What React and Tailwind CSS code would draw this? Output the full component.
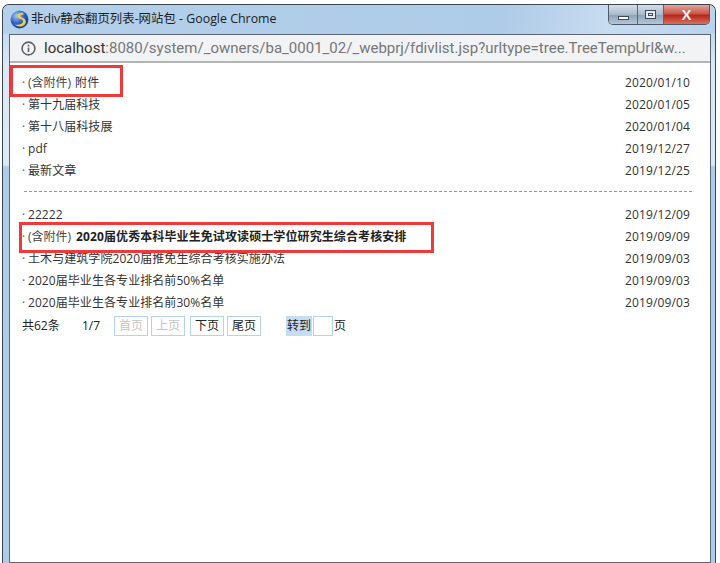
const font = { fontFamily: '"Open Sans","Noto Sans CJK SC",sans-serif' };

function Row({ title, date, attach, bold }) {
  return (
    <div className="flex h-[22px] items-center justify-between pl-[12px] pr-[20px] text-[12px] text-[#333333]">
      <div className="flex items-center whitespace-nowrap">
        <span className="w-[6px] text-[#555555]">·</span>
        {attach && <span className={bold ? "mr-[5px] text-[#444444]" : "mr-[4px] text-[#444444]"}>(含附件)</span>}
        <span className={bold ? "font-bold tracking-[0.1px] text-[#222222]" : "tracking-[0.07px]"}>{title}</span>
      </div>
      <span className="tracking-[0.13px]">{date}</span>
    </div>
  );
}

function PageBtn({ children, disabled, className }) {
  return (
    <span className={"flex h-[20px] w-[34px] items-center justify-center border border-[#b5d3ee] " + (disabled ? "text-[#c4c4c4] " : "text-[#222222] ") + (className || "")}>
      {children}
    </span>
  );
}

function Globe() {
  return (
    <svg width="19" height="19" viewBox="0 0 17 17" className="shrink-0">
      <defs>
        <radialGradient id="g" cx="35%" cy="30%" r="75%">
          <stop offset="0%" stopColor="#a8c8f4" />
          <stop offset="55%" stopColor="#2b62c8" />
          <stop offset="100%" stopColor="#123a8c" />
        </radialGradient>
      </defs>
      <circle cx="8.5" cy="8.5" r="8" fill="url(#g)" />
      <path d="M11.5 2.5 C8 2.5 5.5 4.5 7 6.5 C8.5 8.5 12.5 8 11.5 11 C10.8 13 7.5 13.5 4 13 C7 15.5 12 15.5 13.8 12 C15.5 8.5 11.5 7 9.5 6 C8.5 5 10 3.8 12.5 4 Z" fill="#f2cf3c" />
    </svg>
  );
}

export default function App() {
  return (
    <div className="relative flex h-[563px] w-[720px] flex-col overflow-hidden bg-white pl-[2px] pt-[4px]" style={font}>
      <div className="flex h-[559px] w-[714px] flex-col rounded-t-[7px] border-x border-t border-[#3c4650] bg-[linear-gradient(180deg,#b5d1ec_0px,#c4daf0_30px,#dbe8f5_60px,#dce8f4_160px,#aecbe9_162px,#aecbe9_100%)]">
        <div className="flex h-[29px] shrink-0 items-start justify-between rounded-t-[6px] bg-[linear-gradient(100deg,#b4d0eb_0%,#aecbe7_70%,#c8dcf1_85%,#b9d3ec_100%)] pl-[7px]">
          <div className="flex h-[28px] items-center gap-[2px] pt-[1px]">
            <Globe />
            <span className="whitespace-nowrap text-[12.4px] text-[#1c1c1c]">非div静态翻页列表-网站包 - Google Chrome</span>
          </div>
          <div className="mr-[5px] flex h-[20px] w-[102px] overflow-hidden rounded-b-[5px] border-x border-b border-[#4e5a68]">
            <div className="flex w-[29px] items-end justify-center border-r border-[#5a6674] bg-[linear-gradient(180deg,#d4dfeb_0%,#a9bacc_50%,#8fa3b9_55%,#b4c6d8_100%)] pb-[4px]">
              <div className="h-[4px] w-[11px] border border-[#3e4a58] bg-white" />
            </div>
            <div className="flex w-[26px] items-center justify-center border-r border-[#5a6674] bg-[linear-gradient(180deg,#d4dfeb_0%,#a9bacc_50%,#8fa3b9_55%,#b4c6d8_100%)]">
              <div className="flex h-[9px] w-[11px] items-center justify-center border border-[#3e4a58] bg-[#e4ebf2]">
                <div className="h-[3px] w-[5px] border border-[#3e4a58]" />
              </div>
            </div>
            <div className="flex flex-1 items-center justify-center bg-[linear-gradient(180deg,#e2a59a_0%,#c9584a_45%,#b8281c_55%,#d8705c_100%)]">
              <span className="text-[15px] font-bold leading-none text-[#f4f4f4]" style={{ fontFamily: '"Liberation Sans",sans-serif' }}>X</span>
            </div>
          </div>
        </div>
        <div className="ml-[6px] mr-[4px] flex min-h-0 flex-1 flex-col border border-[#5a6673] bg-white">
          <div className="flex h-[28px] shrink-0 items-center gap-[8px] overflow-hidden border-b-2 border-[#b3b3b3] bg-[#f1f3f5] pl-[11px]">
            <svg width="15" height="15" viewBox="0 0 15 15" fill="none" stroke="#5f6368" strokeWidth="1.6" className="shrink-0">
              <circle cx="7.5" cy="7.5" r="6.4" />
              <path d="M7.5 6.6v4.4M7.5 3.8v1.6" />
            </svg>
            <span className="whitespace-nowrap text-[15px] text-[#777777]" style={{ fontFamily: 'Roboto,sans-serif' }}>
              <span className="text-[#333333]">localhost</span>:8080/system/_owners/ba_0001_02/_webprj/fdivlist.jsp?urltype=tree.TreeTempUrl&amp;w...
            </span>
          </div>
          <div className="flex flex-col pt-[9px]">
            <Row attach title="附件" date="2020/01/10" />
            <Row title="第十九届科技" date="2020/01/05" />
            <Row title="第十八届科技展" date="2020/01/04" />
            <Row title="pdf" date="2019/12/27" />
            <Row title="最新文章" date="2019/12/25" />
            <div className="ml-[14px] mr-[18px] mt-[9px] mb-[12px] border-t border-dashed border-[#999999]" />
            <Row title="22222" date="2019/12/09" />
            <Row attach bold title="2020届优秀本科毕业生免试攻读硕士学位研究生综合考核安排" date="2019/09/09" />
            <Row title="土木与建筑学院2020届推免生综合考核实施办法" date="2019/09/03" />
            <Row title="2020届毕业生各专业排名前50%名单" date="2019/09/03" />
            <Row title="2020届毕业生各专业排名前30%名单" date="2019/09/03" />
            <div className="mt-[2px] flex h-[20px] items-center pl-[12px] text-[12px] text-[#222222]">
              <span className="w-[60px]">共62条</span>
              <span className="w-[32px]">1/7</span>
              <div className="flex gap-[3px]">
                <PageBtn disabled>首页</PageBtn>
                <PageBtn disabled>上页</PageBtn>
                <PageBtn className="ml-[2px]">下页</PageBtn>
                <PageBtn>尾页</PageBtn>
              </div>
              <span className="ml-[25px] flex h-[20px] w-[26px] items-center justify-center bg-[#c5dcf3]">转到</span>
              <span className="ml-[1px] h-[20px] w-[20px] border border-[#b5d3ee]" />
              <span className="ml-[1px]">页</span>
            </div>
          </div>
        </div>
      </div>
      <div className="absolute left-[10px] top-[65px] h-[32px] w-[113px] border-[3px] border-[#f03a3a]" />
      <div className="absolute left-[19px] top-[222px] h-[31px] w-[415px] border-[3px] border-[#f03a3a]" />
    </div>
  );
}
